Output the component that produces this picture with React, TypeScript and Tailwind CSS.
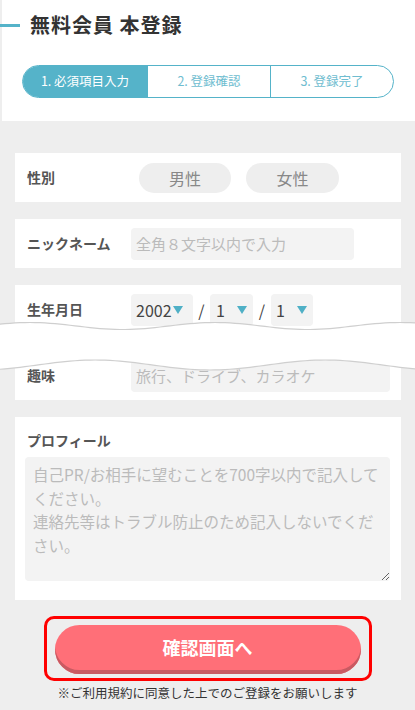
import React from "react";

function wave(fn: (x: number) => number) {
  const pts: string[] = [];
  for (let x = 0; x <= 415; x += 5) pts.push(`${x},${fn(x).toFixed(2)}`);
  return pts;
}

function TornEdge() {
  // torn paper band between the birthday row and the hobby row
  const top = (x: number) => 10 - 3.5 * Math.cos((2 * Math.PI * (x - 30)) / 185);
  const bottom = (x: number) => 49 - 5 * Math.cos((2 * Math.PI * (x - 95)) / 230);
  const t = wave(top);
  const b = wave(bottom);
  const fill = `M${t.join(" L")} L${[...b].reverse().join(" L")} Z`;
  return (
    <svg
      className="pointer-events-none absolute left-0 top-[31px] h-[60px] w-[415px]"
      viewBox="0 0 415 60"
      preserveAspectRatio="none"
    >
      <path d={fill} fill="#ffffff" />
      <path d={`M${t.join(" L")}`} fill="none" stroke="#cfcfcf" strokeWidth="1.2" />
      <path d={`M${b.join(" L")}`} fill="none" stroke="#cfcfcf" strokeWidth="1.2" />
    </svg>
  );
}

function Arrow() {
  return (
    <svg width="10" height="8" viewBox="0 0 10 8" className="shrink-0">
      <path d="M0 0 L10 0 L5 8 Z" fill="#4fb0c6" />
    </svg>
  );
}

function Row({ label, children }: { label: string; children: React.ReactNode }) {
  return (
    <div className="flex h-[49px] items-center bg-white pl-[12px]">
      <div className="w-[104px] shrink-0 text-[14px] font-bold text-[#555]">{label}</div>
      {children}
    </div>
  );
}

export default function App() {
  const steps = ["1. 必須項目入力", "2. 登録確認", "3. 登録完了"];
  return (
    <div className="min-h-screen w-[415px] bg-[#eeeeee] font-[Noto_Sans_CJK_JP,sans-serif]">
      {/* header */}
      <div className="ml-[2px] h-[121px] bg-white">
        <div className="flex items-center pt-[11px]">
          <div className="-ml-[2px] h-[3px] w-[20px] bg-[#55b3c9]" />
          <h1 className="ml-[10px] text-[20px] font-bold leading-[28px] tracking-[0.05em] text-[#333]">
            無料会員 本登録
          </h1>
        </div>
        {/* steps */}
        <div className="ml-[20px] mt-[26px] flex h-[33px] w-[372px] overflow-hidden rounded-full border border-[#55b3c9]">
          {steps.map((s, i) => (
            <div
              key={s}
              className={
                i === 0
                  ? "flex w-[124px] items-center justify-center bg-[#55b3c9] text-[12.5px] text-white"
                  : "flex flex-1 items-center justify-center border-l border-[#55b3c9] text-[12.5px] text-[#6fbdd0]"
              }
            >
              {s}
            </div>
          ))}
        </div>
      </div>

      {/* form */}
      <div className="flex flex-col gap-[17px] pl-[15px] pr-[14px] pt-[32px]">
        <Row label="性別">
          <div className="ml-[8px] flex gap-[15px]">
            <button className="h-[30px] w-[92px] rounded-full bg-[#eeeeee] text-[16px] text-[#888]">男性</button>
            <button className="h-[30px] w-[93px] rounded-full bg-[#eeeeee] text-[16px] text-[#888]">女性</button>
          </div>
        </Row>

        <Row label="ニックネーム">
          <input
            placeholder="全角８文字以内で入力"
            className="h-[32px] w-[223px] rounded-[4px] bg-[#f3f3f3] px-[5px] text-[15px] outline-none placeholder:text-[#bbb]"
          />
        </Row>

        <div className="relative -ml-[15px] -mr-[14px] flex flex-col gap-[17px] pl-[15px] pr-[14px]">
          <Row label="生年月日">
            <div className="flex items-center text-[16px] text-[#444]">
              <div className="flex h-[32px] w-[62px] items-center gap-[1px] rounded-[4px] bg-[#f3f3f3] pl-[5px]">
                <span>2002</span>
                <Arrow />
              </div>
              <span className="w-[17px] text-center">/</span>
              <div className="flex h-[32px] w-[43px] items-center rounded-[4px] bg-[#f3f3f3] pl-[6px]">
                <span className="w-[21px]">1</span>
                <Arrow />
              </div>
              <span className="w-[18px] text-center">/</span>
              <div className="flex h-[32px] w-[42px] items-center rounded-[4px] bg-[#f3f3f3] pl-[5px]">
                <span className="w-[21px]">1</span>
                <Arrow />
              </div>
            </div>
          </Row>
          <Row label="趣味">
            <input
              placeholder="旅行、ドライブ、カラオケ"
              className="h-[32px] w-[259px] rounded-[4px] bg-[#f3f3f3] px-[5px] text-[15px] outline-none placeholder:text-[#bbb]"
            />
          </Row>
          <TornEdge />
        </div>

        <div className="flex flex-col bg-white pb-[19px] pl-[10px] pr-[11px] pt-[13px]">
          <div className="pl-[2px] text-[14px] font-bold leading-[20px] text-[#555]">プロフィール</div>
          <textarea
            placeholder={"自己PR/お相手に望むことを700字以内で記入して\nください。\n連絡先等はトラブル防止のため記入しないでくだ\nさい。"}
            className="mt-[7px] h-[124px] w-full rounded-[4px] bg-[#f3f3f3] px-[8px] pt-[6px] text-[15.5px] leading-[23.5px] outline-none placeholder:text-[#bbb]"
          />
        </div>
      </div>

      {/* submit */}
      <div className="flex flex-col items-center pt-[16px]">
        <div className="w-[328px] rounded-[10px] border-[3px] border-[#ff0000] px-[8px] pb-[4px] pt-[6px]">
          <button className="h-[49px] w-full rounded-full bg-[#ff6f78] pb-[4px] text-[18px] font-bold text-white shadow-[inset_0_-4px_0_#c95a62]">
            確認画面へ
          </button>
        </div>
        <p className="mt-[3px] text-[12.5px] text-[#333]">※ご利用規約に同意した上でのご登録をお願いします</p>
      </div>
    </div>
  );
}
